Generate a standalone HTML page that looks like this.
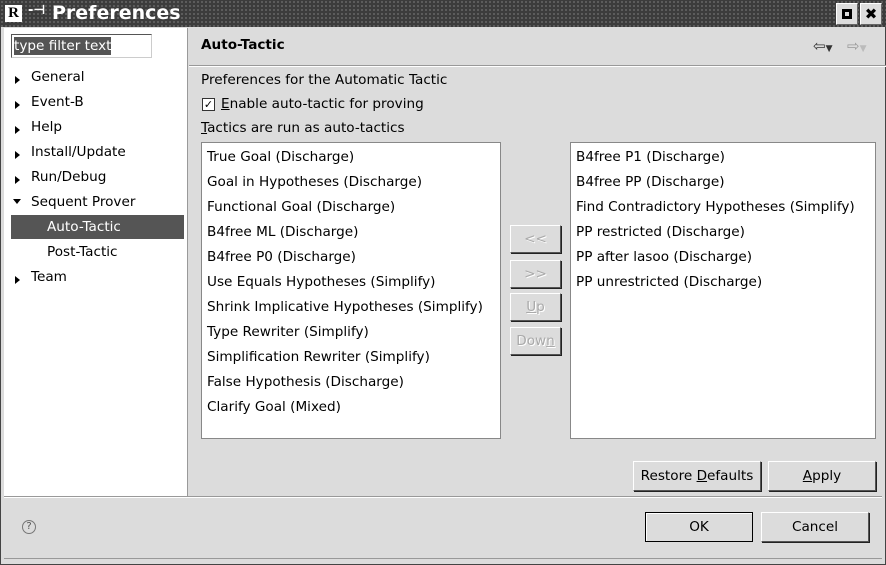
<!DOCTYPE html>
<html><head><style>
*{margin:0;padding:0;box-sizing:border-box}
body{width:886px;height:565px;background:#dcdcdc;font-family:"DejaVu Sans","Liberation Sans",sans-serif;font-size:13.6px;color:#000;position:relative;overflow:hidden}
.a{position:absolute;white-space:nowrap}
.title{left:0;top:0;width:886px;height:27px;background:#3c3c3c;background-image:radial-gradient(#666 0.8px,transparent 1px);background-size:4px 4px}
.btn{position:absolute;background:#dcdcdc;border:1px solid #fff;border-right-color:#555;border-bottom-color:#555;box-shadow:1px 1px 0 #222;text-align:center;font-size:13.6px}
.dis{color:#aaa;text-shadow:1px 1px 0 #fff}
.list{position:absolute;background:#fff;border:1px solid #888}
.list div{position:absolute;left:5px}
.tri{display:inline-block;width:0;height:0;border-left:5px solid #000;border-top:4px solid transparent;border-bottom:4px solid transparent}
</style></head><body>
<div class="a title"></div>
<div class="a" style="left:5px;top:5px;width:17px;height:17px;background:#fff;color:#000;font:bold 15px 'Liberation Serif',serif;text-align:center;line-height:17px">R</div>
<div class="a" style="left:28px;top:3px;color:#fff;font-size:13px;font-weight:bold">-⊣</div>
<div class="a" style="left:52px;top:2px;color:#fff;font-size:19px;font-weight:bold">Preferences</div>
<div class="a" style="left:836px;top:3px;width:22px;height:22px;background:#ddd;border:1px solid #fff;border-right-color:#666;border-bottom-color:#666"><div style="position:absolute;left:5px;top:5px;width:10px;height:10px;border:3px solid #000"></div></div>
<div class="a" style="left:860px;top:3px;width:22px;height:22px;background:#ddd;border:1px solid #fff;border-right-color:#666;border-bottom-color:#666;font-weight:bold;text-align:center;line-height:20px;font-size:15px">✖</div>
<div class="a" style="left:0;top:27px;width:886px;height:538px;border:1px solid #444;border-top:none"></div>
<div class="a" style="left:4px;top:28px;width:184px;height:468px;background:#fff;border-right:1px solid #999"></div>
<div class="a" style="left:11px;top:34px;width:141px;height:24px;border:1px solid #555;border-right-color:#ccc;border-bottom-color:#ccc;background:#fff"><span style="position:absolute;left:2px;top:2px;background:#555;color:#fff;line-height:18px">type filter text</span></div>
<div class="a" style="left:15px;top:72px"><span class="tri"></span></div><div class="a" style="left:31px;top:69px">General</div>
<div class="a" style="left:15px;top:97px"><span class="tri"></span></div><div class="a" style="left:31px;top:94px">Event-B</div>
<div class="a" style="left:15px;top:122px"><span class="tri"></span></div><div class="a" style="left:31px;top:119px">Help</div>
<div class="a" style="left:15px;top:147px"><span class="tri"></span></div><div class="a" style="left:31px;top:144px">Install/Update</div>
<div class="a" style="left:15px;top:172px"><span class="tri"></span></div><div class="a" style="left:31px;top:169px">Run/Debug</div>
<div class="a" style="left:13px;top:199px;width:0;height:0;border-top:5px solid #000;border-left:4px solid transparent;border-right:4px solid transparent"></div><div class="a" style="left:31px;top:194px">Sequent Prover</div>
<div class="a" style="left:11px;top:215px;width:173px;height:24px;background:#555"></div>
<div class="a" style="left:47px;top:219px;color:#fff">Auto-Tactic</div>
<div class="a" style="left:47px;top:244px">Post-Tactic</div>
<div class="a" style="left:15px;top:272px"><span class="tri"></span></div><div class="a" style="left:31px;top:269px">Team</div>
<div class="a" style="left:201px;top:37px;font-weight:bold">Auto-Tactic</div>
<div class="a" style="left:813px;top:37px;font-size:15px;color:#333">⇦<span style="font-size:9px">▼</span></div>
<div class="a" style="left:847px;top:37px;font-size:15px;color:#999">⇨<span style="font-size:9px;color:#bbb">▼</span></div>
<div class="a" style="left:189px;top:65px;width:697px;height:2px;border-top:1px solid #999;border-bottom:1px solid #fff"></div>
<div class="a" style="left:201px;top:72px">Preferences for the Automatic Tactic</div>
<div class="a" style="left:202px;top:98px;width:13px;height:13px;border:1px solid #333;background:#fff;font-size:11px;line-height:11px;text-align:center">✓</div>
<div class="a" style="left:221px;top:96px"><u>E</u>nable auto-tactic for proving</div>
<div class="a" style="left:201px;top:120px"><u>T</u>actics are run as auto-tactics</div>
<div class="list" style="left:201px;top:142px;width:300px;height:297px">
<div style="top:6px">True Goal (Discharge)</div><div style="top:31px">Goal in Hypotheses (Discharge)</div><div style="top:56px">Functional Goal (Discharge)</div><div style="top:81px">B4free ML (Discharge)</div><div style="top:106px">B4free P0 (Discharge)</div><div style="top:131px">Use Equals Hypotheses (Simplify)</div><div style="top:156px">Shrink Implicative Hypotheses (Simplify)</div><div style="top:181px">Type Rewriter (Simplify)</div><div style="top:206px">Simplification Rewriter (Simplify)</div><div style="top:231px">False Hypothesis (Discharge)</div><div style="top:256px">Clarify Goal (Mixed)</div>
</div>
<div class="list" style="left:570px;top:142px;width:306px;height:297px">
<div style="top:6px">B4free P1 (Discharge)</div><div style="top:31px">B4free PP (Discharge)</div><div style="top:56px">Find Contradictory Hypotheses (Simplify)</div><div style="top:81px">PP restricted (Discharge)</div><div style="top:106px">PP after lasoo (Discharge)</div><div style="top:131px">PP unrestricted (Discharge)</div>
</div>
<div class="btn dis" style="left:510px;top:225px;width:51px;height:28px;line-height:27px">&lt;&lt;</div>
<div class="btn dis" style="left:510px;top:260px;width:51px;height:28px;line-height:27px">&gt;&gt;</div>
<div class="btn dis" style="left:510px;top:293px;width:51px;height:28px;line-height:27px"><u>U</u>p</div>
<div class="btn dis" style="left:510px;top:327px;width:51px;height:28px;line-height:27px">Dow<u>n</u></div>
<div class="btn" style="left:633px;top:461px;width:128px;height:30px;line-height:29px">Restore <u>D</u>efaults</div>
<div class="btn" style="left:768px;top:461px;width:108px;height:30px;line-height:29px"><u>A</u>pply</div>
<div class="a" style="left:4px;top:496px;width:878px;height:2px;border-top:1px solid #999;border-bottom:1px solid #fff"></div>
<div class="a" style="left:22px;top:520px;width:14px;height:14px;border:1px solid #777;border-radius:50%;font-size:10px;text-align:center;line-height:12px;color:#555">?</div>
<div class="btn" style="left:645px;top:512px;width:108px;height:30px;line-height:29px;border:1px solid #000;box-shadow:inset 1px 1px 0 #fff">OK</div>
<div class="btn" style="left:761px;top:512px;width:108px;height:30px;line-height:29px">Cancel</div>
<div class="a" style="left:4px;top:558px;width:878px;height:4px;border-top:1px solid #999"></div>
</body></html>
